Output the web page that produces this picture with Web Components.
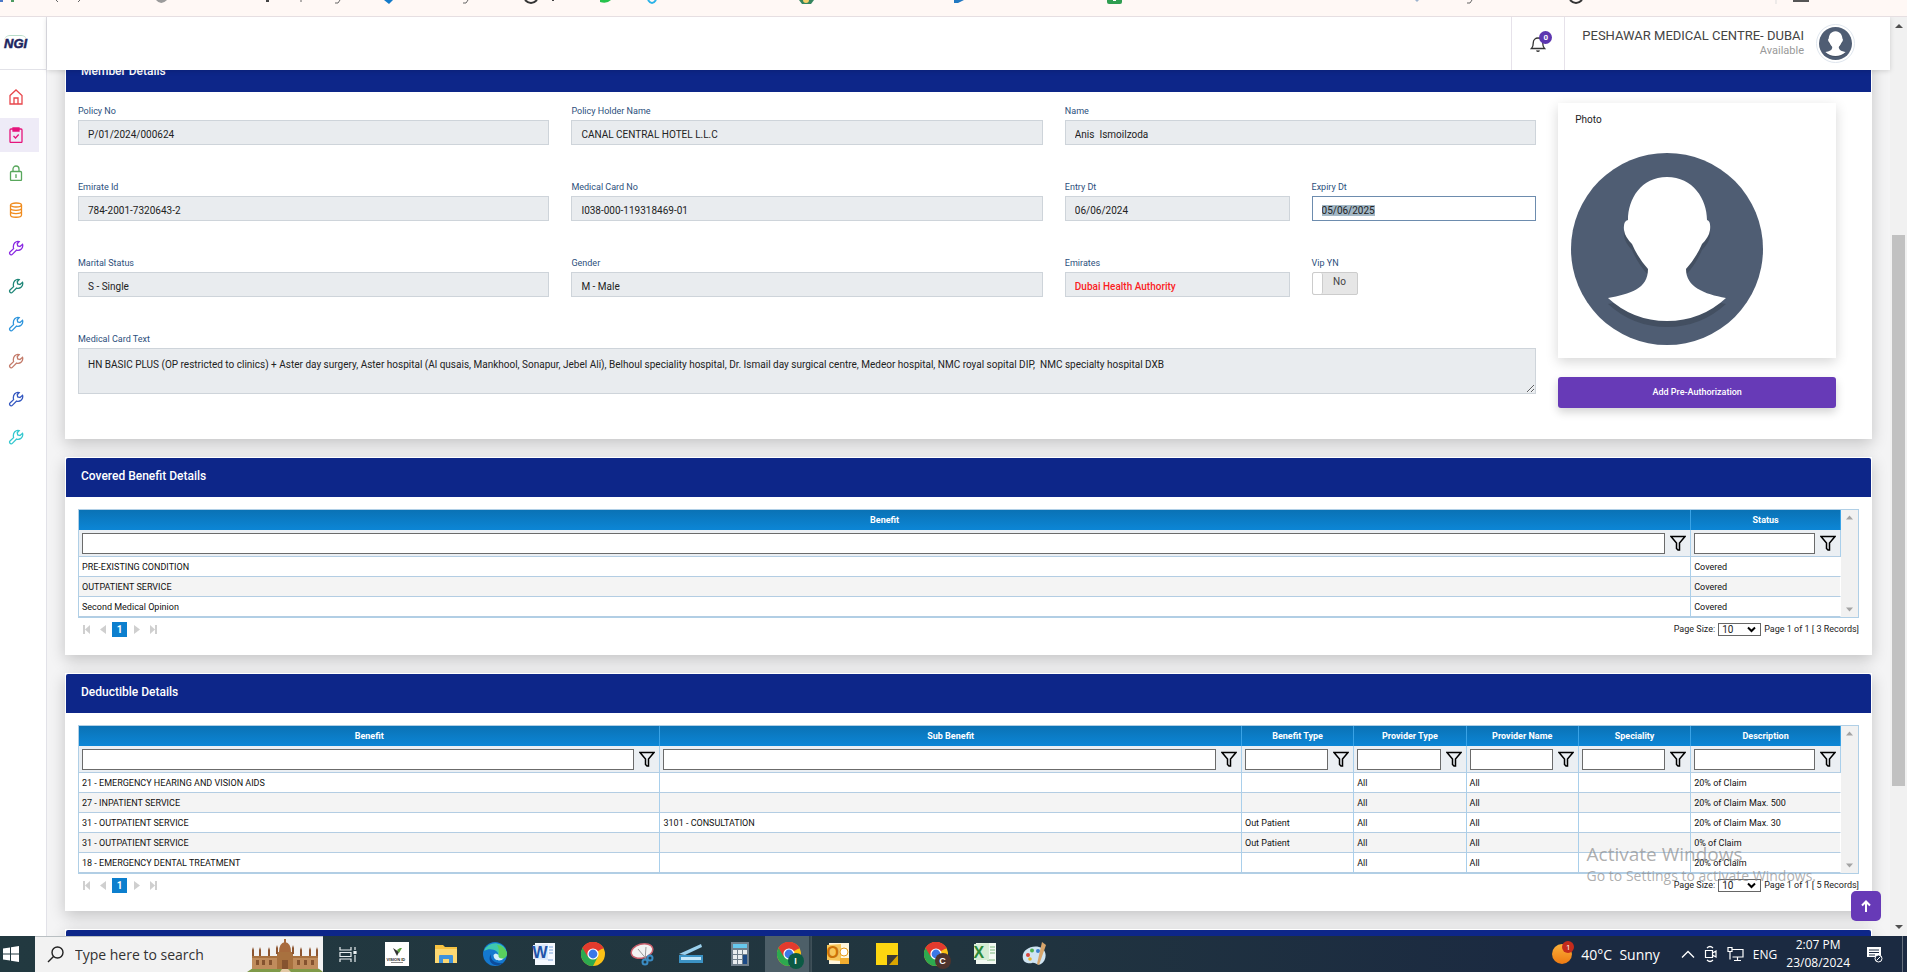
<!DOCTYPE html>
<html lang="en">
<head>
<meta charset="utf-8">
<title>Member Details</title>
<style>
  html, body { height: 100%; }
  body {
    margin: 0;
    overflow: hidden;
    font-family: Roboto, "Liberation Sans", sans-serif;
    font-size: 10px;
    color: #222;
  }
  claims-desktop { height: 100%; }
</style>
</head>
<body>
<claims-desktop></claims-desktop>

<script>
const make = (html) => {
  const t = document.createElement('template');
  t.innerHTML = html;
  return t;
};

class BaseElement extends HTMLElement {
  constructor() {
    super();
    this.attachShadow({ mode: 'open' });
    this.shadowRoot.appendChild(this.constructor.template.content.cloneNode(true));
  }
  $(sel) { return this.shadowRoot.querySelector(sel); }
}

// ---------- user silhouette ----------
class UserAvatar extends BaseElement {
  static template = make(`
    <style>
      :host { display: block; }
      svg { display: block; width: 100%; height: 100%; }
    </style>
    <svg viewBox="0 0 192 192" role="img" aria-label="User photo">
      <defs><path id="bust" d="M96 24 C70 24 57 46 57 67 Q52 68 53 77 Q54 84 61 91 Q67 105 77 116 C77 136 59 141 37 145 Q62 168 96 168 Q130 168 155 145 C133 141 115 134 115 116 Q125 105 131 91 Q138 84 139 77 Q140 68 136 67 C136 46 122 24 96 24Z"/></defs>
      <circle cx="96" cy="96" r="96" fill="#4f5d73"/>
      <use href="#bust" y="6" fill="#434f61"/>
      <use href="#bust" fill="#fff"/>
    </svg>`);
}
customElements.define('user-avatar', UserAvatar);

// ---------- strip of the browser's bookmark bar ----------
class BookmarkStrip extends BaseElement {
  static template = make(`
    <style>
      :host { display: block; flex: none; height: 16px; background: #fff8f5; border-bottom: 1px solid #e6dfe2; overflow: hidden; }
      svg { display: block; }
    </style>
    <svg width="1907" height="8" viewBox="0 0 1907 8" aria-hidden="true">
      <g fill="none" stroke="#666" stroke-width="1">
        <path d="M56 0l2 2M80 0l-2 2M301 0v2M340 0l-2 3h-3M468 0l-2 3h-3M1472 0l-2 3h-3"/>
      </g>
      <path d="M0 0h3v2H0z" fill="#4a78c8"/><path d="M11 0h3v2h-3z" fill="#4b9b62"/>
      <path d="M156 0q5 6 11 0z" fill="#9b9b9b"/>
      <path d="M266 0h3v2h-3zM552 0h2v1h-2z" fill="#444"/>
      <path d="M384 0h9l-4 4z" fill="#137ac9"/>
      <path d="M525 0q6 6 12 0M1570 0q6 6 12 0" fill="none" stroke="#333" stroke-width="2"/>
      <path d="M600 0h11q-4 4-11 2z" fill="#27c24c"/>
      <path d="M648 0q4 6 8 0" fill="none" stroke="#2bb3e8" stroke-width="2"/>
      <path d="M799 0h15l-3 4h-9z" fill="#35855f"/><circle cx="806" cy="0" r="3" fill="#f3d06b"/>
      <path d="M954 0h10l-6 3h-4z" fill="#2279c2"/>
      <path d="M1107 0h15v2q0 2-2 2h-11q-2 0-2-2z" fill="#2f9e51"/><path d="M1113 0h3v1h-3z" fill="#fff"/>
      <path d="M1415 0h4l-2 2z" fill="#9db3cf"/>
      <path d="M1776 0v4" stroke="#ddd"/>
      <path d="M1794 0v1h14v-1" fill="none" stroke="#555" stroke-width="2"/>
    </svg>`);
}
customElements.define('bookmark-strip', BookmarkStrip);

// ---------- left icon menu ----------
const wrench = '<path d="M2 14.2c-.7-.7-.6-1.6 0-2.2l3.6-3.4C5 6 5.5 4 6.8 2.7 8 1.500 9.600 1 11.200 1.500L9.200 3.700l.5 2.300 2.300.6 2.500-2.300c.6 1.900 0 3.500-1.200 4.700-1.300 1.200-3 1.600-4.700 1.100l-4.300 4.300c-.7.7-1.600.5-2.300-.2z"/>';
const menuIcons = [
  ['Home', '#e8474c', '<path d="M2 6.500L8 1l6 5.500V15H2zM6 15V9h4v6"/>'],
  ['Authorizations', '#e5157c', '<rect x="2" y="2" width="12" height="13.500" rx="1"/><path d="M5 1h6v3H5z" fill="currentColor"/><path d="M5.500 9l2 2 3.200-3.500"/>', true],
  ['Security', '#58a75c', '<rect x="2.500" y="6.500" width="11" height="9" rx="1"/><path d="M5 6.500V4a3 3 0 0 1 6 0v2.500M8 9.500v3.500M7.300 10h1.400"/>'],
  ['Data', '#f08c1e', '<ellipse cx="8" cy="3" rx="5.500" ry="2"/><path d="M2.500 3v10c0 3 11 3 11 0V3M2.500 6.300c0 2.700 11 2.700 11 0M2.500 9.600c0 2.700 11 2.700 11 0"/>'],
  ['Setup', '#8a2be2', wrench], ['Tools', '#1f8678', wrench], ['Reports', '#2f95dc', wrench],
  ['Claims', '#c47c6b', wrench], ['Masters', '#3558c0', wrench], ['Utilities', '#35c8cf', wrench]
];
class SideMenu extends BaseElement {
  static template = make(`
    <style>
      :host { display: block; flex: none; width: 46px; background: #fff; border-right: 1px solid #e2e2e8; }
      .logo { height: 52px; display: flex; align-items: center; padding-left: 4px; border-bottom: 1px solid #e2e2e8;
        font: italic bold 13px/16px "Liberation Sans", sans-serif; color: #1d2560; -webkit-text-stroke: 0.5px #1d2560; }
      .logo span { border-top: 1px solid #b8dcc9; border-radius: 6px; }
      nav { display: grid; align-content: space-between; height: 374px; padding-top: 10px; }
      a { display: flex; align-items: center; width: 23px; height: 34px; padding-left: 8px; padding-right: 8px; }
      a.on { background: #eeebf7; }
      svg { width: 16px; height: 16px; fill: none; stroke: currentColor; stroke-width: 1.3; }
    </style>
    <div class="logo"><span>NGI</span></div>
    <nav></nav>`);
  connectedCallback() {
    this.$('nav').innerHTML = menuIcons.map(([name, color, path, on]) =>
      `<a href="#" aria-label="${name}" class="${on ? 'on' : ''}" style="color:${color}"><svg viewBox="0 0 16 16">${path}</svg></a>`).join('');
  }
}
customElements.define('side-menu', SideMenu);

// ---------- top bar ----------
class TopBar extends BaseElement {
  static template = make(`
    <style>
      :host { display: flex; flex: none; justify-content: flex-end; height: 53px; background: #fff; position: relative; z-index: 2;
        box-shadow: 0 1px 5px rgba(0,0,0,.15); }
      .bell { position: relative; width: 54px; border: solid #e6e2ea; border-width: 0 1px; background: none; padding: 0; }
      .bell svg { display: block; margin: 0 auto 0 18px; }
      .badge { position: absolute; left: 27px; top: 14px; width: 13px; height: 13px; border-radius: 50%; background: #5d36b0;
        color: #fff; font: bold 8px/13px Roboto, sans-serif; text-align: center; }
      .user { display: flex; align-items: center; padding: 0 35px 0 17px; gap: 12px; }
      .who { text-align: right; color: #444; font-size: 13px; line-height: 16px; padding-bottom: 2px; }
      .who small { display: block; font-size: 11px; line-height: 14px; color: #999; }
      user-avatar { width: 33px; height: 33px; padding: 2px; border: 1px solid #dfe6ee; border-radius: 50%; }
    </style>
    <button class="bell" aria-label="Notifications">
      <svg width="16" height="18" viewBox="0 0 16 18" fill="none" stroke="#333" stroke-width="1.300"><path d="M1.500 13.500C3 12 3.300 10 3.300 7.500c0-6 9.400-6 9.400 0 0 2.500.3 4.500 1.800 6z"/><path d="M6.500 15.500q1.500 1.500 3 0"/></svg>
      <span class="badge">0</span>
    </button>
    <div class="user">
      <div class="who">PESHAWAR MEDICAL CENTRE- DUBAI<small>Available</small></div>
      <user-avatar></user-avatar>
    </div>`);
}
customElements.define('top-bar', TopBar);

// ---------- card with a blue title bar ----------
class PanelCard extends BaseElement {
  static template = make(`
    <style>
      :host { display: block; background: #fff; padding: 1px 1px 0; margin-bottom: 18px; box-shadow: 0 5px 15px rgba(0,0,0,.2); }
      h2 { margin: 0; height: 39px; padding: 0 15px; background: #0d2689; border-radius: 2px 2px 0 0; color: #fff;
        font-weight: 500; font-size: 12px; line-height: 37px; }
      .body { padding: 12px; }
      :host([form]) .body { padding: 11px 35px 31px 12px; }
      :host([grid]) .body { padding: 12px 12px 10px; }
    </style>
    <h2></h2>
    <div class="body"><slot></slot></div>`);
  connectedCallback() { this.$('h2').textContent = this.getAttribute('heading'); }
}
customElements.define('panel-card', PanelCard);

// ---------- labelled field ----------
class FormField extends BaseElement {
  static template = make(`
    <style>
      :host { display: block; min-width: 0; }
      label { display: block; height: 17px; line-height: 17px; font-size: 9px; color: #2c4f7c; }
      input, textarea { display: block; box-sizing: border-box; width: 100%; height: 25px; margin: 0; padding: 3px 9px 0;
        border: 1px solid #ced4da; border-radius: 0; background: #e9ecef; color: #222; font: inherit; outline: none; }
      textarea { height: 46px; padding: 9px 9px 0; line-height: 14px; overflow: hidden; }
      :host([alert]) input { color: #fb1d24; font-weight: 500; }
      :host([active]) input { background: #fff; border-color: #6d8cae; }
      ::selection { background: #a3b8c6; color: #222; }
    </style>
    <label for="f"></label>`);
  connectedCallback() {
    this.$('label').textContent = this.getAttribute('label');
    const box = document.createElement(this.hasAttribute('multiline') ? 'textarea' : 'input');
    box.id = 'f';
    box.value = this.getAttribute('value');
    box.readOnly = true;
    this.shadowRoot.appendChild(box);
    if (this.hasAttribute('active')) {
      box.readOnly = false;
      box.focus();
      box.select();
    }
  }
}
customElements.define('form-field', FormField);

class YesNoSwitch extends BaseElement {
  static template = make(`
    <style>
      :host { display: block; }
      label { display: block; height: 17px; line-height: 17px; font-size: 9px; color: #2c4f7c; }
      .switch { display: flex; box-sizing: border-box; width: 46px; height: 23px; border: 1px solid #ccc; border-radius: 2px; background: #e6e6e6; }
      input { appearance: none; flex: none; width: 10px; margin: 0; background: #fff; border-right: 1px solid #ccc; border-radius: 2px; }
      span { flex: 1; text-align: center; line-height: 18px; color: #444; }
    </style>
    <label for="s">Vip YN</label>
    <div class="switch"><input type="checkbox" id="s"><span>No</span></div>`);
}
customElements.define('yes-no-switch', YesNoSwitch);

// ---------- member form ----------
class MemberForm extends BaseElement {
  static template = make(`
    <style>
      :host { display: grid; grid-template-columns: 21fr 4fr; gap: 22px; }
      .fields { display: grid; grid-template-columns: repeat(3, 1fr); gap: 34px 22px; align-content: start; }
      .pair { display: grid; grid-template-columns: 1fr 1fr; gap: 22px; }
      .wide { grid-column: 1 / -1; }
      .photo { height: 230px; padding: 12px 13px 13px; box-shadow: 0 4px 12px rgba(0,0,0,.16); background: #fff; }
      .photo p { margin: 0; height: 38px; padding-left: 4px; line-height: 10px; }
      .photo user-avatar { width: 192px; height: 192px; }
      button { display: block; width: 100%; height: 31px; margin-top: 19px; border: 0; border-radius: 3px; background: #673ab7; color: #fff;
        font: 500 9px/31px Roboto, sans-serif; box-shadow: 0 4px 10px rgba(0,0,0,.18); padding: 0; }
    </style>
    <div class="fields">
      <form-field label="Policy No" value="P/01/2024/000624"></form-field>
      <form-field label="Policy Holder Name" value="CANAL CENTRAL HOTEL L.L.C"></form-field>
      <form-field label="Name" value="Anis  Ismoilzoda"></form-field>
      <form-field label="Emirate Id" value="784-2001-7320643-2"></form-field>
      <form-field label="Medical Card No" value="I038-000-119318469-01"></form-field>
      <div class="pair">
        <form-field label="Entry Dt" value="06/06/2024"></form-field>
        <form-field label="Expiry Dt" value="05/06/2025" active></form-field>
      </div>
      <form-field label="Marital Status" value="S - Single"></form-field>
      <form-field label="Gender" value="M - Male"></form-field>
      <div class="pair">
        <form-field label="Emirates" value="Dubai Health Authority" alert></form-field>
        <yes-no-switch></yes-no-switch>
      </div>
      <form-field class="wide" multiline label="Medical Card Text" value="HN BASIC PLUS (OP restricted to clinics) + Aster day surgery, Aster hospital (Al qusais, Mankhool, Sonapur, Jebel Ali), Belhoul speciality hospital, Dr. Ismail day surgical centre, Medeor hospital, NMC royal sopital DIP,  NMC specialty hospital DXB"></form-field>
    </div>
    <div>
      <div class="photo"><p>Photo</p><user-avatar></user-avatar></div>
      <button>Add Pre-Authorization</button>
    </div>`);
}
customElements.define('member-form', MemberForm);

// ---------- filterable grid ----------
const grids = {
  covered: {
    cols: [['Benefit', 91.5], ['Status', 8.5]],
    rows: [['PRE-EXISTING CONDITION', 'Covered'], ['OUTPATIENT SERVICE', 'Covered'], ['Second Medical Opinion', 'Covered']]
  },
  deductible: {
    cols: [['Benefit', 33], ['Sub Benefit', 33], ['Benefit Type', 6.375], ['Provider Type', 6.375], ['Provider Name', 6.375], ['Speciality', 6.375], ['Description', 8.5]],
    rows: [
      ['21 - EMERGENCY HEARING AND VISION AIDS', '', '', 'All', 'All', '', '20% of Claim'],
      ['27 - INPATIENT SERVICE', '', '', 'All', 'All', '', '20% of Claim Max. 500'],
      ['31 - OUTPATIENT SERVICE', '3101 - CONSULTATION', 'Out Patient', 'All', 'All', '', '20% of Claim Max. 30'],
      ['31 - OUTPATIENT SERVICE', '', 'Out Patient', 'All', 'All', '', '0% of Claim'],
      ['18 - EMERGENCY DENTAL TREATMENT', '', '', 'All', 'All', '', '20% of Claim']
    ]
  }
};
class DataGrid extends BaseElement {
  static template = make(`
    <style>
      :host { display: block; }
      .frame { display: flex; border: 1px solid #b0cfe6; }
      table { flex: 1; width: 0; table-layout: fixed; border-collapse: separate; border-spacing: 0; }
      th, td { padding: 0; box-sizing: border-box; border-right: 1px solid #a9cfeb; overflow: hidden; white-space: nowrap; }
      th { height: 20px; background: linear-gradient(#0a72b5, #0c86d6); border-right-color: #3aa3e6; color: #fff;
        font-weight: bold; font-size: 9px; }
      .filter td { height: 27px; background: #ebeff3; border-bottom: 1px solid #b3cde3; }
      .filter div { display: flex; align-items: center; gap: 5px; padding: 0 4px 0 3px; }
      .filter input { flex: 1; min-width: 0; box-sizing: border-box; height: 21px; border: 1px solid #6b6b6b; padding: 0 2px; background: #fff; }
      .filter button { flex: none; width: 16px; height: 16px; padding: 0; border: 0; background: none; }
      svg { display: block; }
      .row td { height: 20px; padding-left: 3px; border-bottom: 1px solid #b3cde3; font-size: 9px; line-height: 16px; color: #111; }
      .row:nth-child(odd) td { background: #f4f4f4; }
      .row td:last-child { border-right-color: #fff; }
      .bar { flex: none; width: 17px; display: flex; flex-direction: column; justify-content: space-between; align-items: center;
        background: #f1f1f1; padding: 5px 0; box-sizing: border-box; }
      .pager { display: flex; align-items: center; justify-content: space-between; height: 16px; padding: 3px 0 8px; font-size: 9px; color: #222; }
      .pages { display: flex; align-items: center; gap: 2px; }
      .pages button { display: grid; place-items: center; width: 15px; height: 15px; padding: 0; border: 0; background: none; }
      .pages .on { background: #0c7fce; color: #fff; font: bold 10px/15px Roboto, sans-serif; }
      .size { display: flex; align-items: center; gap: 3px; }
      select { appearance: none; box-sizing: border-box; width: 43px; height: 13px; padding: 0 0 0 3px; border: 1px solid #666; border-radius: 0;
        color: #222; font: 10px/11px Roboto, sans-serif; background: #fff; }
      .pick { display: grid; align-items: center; }
      .pick > * { grid-area: 1 / 1; }
      .pick svg { justify-self: end; margin-right: 5px; pointer-events: none; }
    </style>
    <div class="frame">
      <table><thead></thead><tbody></tbody></table>
      <div class="bar">
        <svg width="7" height="5" fill="#a3a3a3"><path d="M0 4.500L3.500.5 7 4.500z"/></svg>
        <svg width="7" height="5" fill="#a3a3a3"><path d="M0 .5h7L3.500 4.500z"/></svg>
      </div>
    </div>
    <div class="pager">
      <div class="pages">
        <button aria-label="First page"><svg width="8" height="9" fill="#cfcfcf"><path d="M1 0h2v9H1zM8 0v9L3 4.500z"/></svg></button>
        <button aria-label="Previous page"><svg width="6" height="9" fill="#cfcfcf"><path d="M6 0v9L0 4.500z"/></svg></button>
        <button class="on">1</button>
        <button aria-label="Next page"><svg width="6" height="9" fill="#cfcfcf"><path d="M0 0v9l6-4.500z"/></svg></button>
        <button aria-label="Last page"><svg width="8" height="9" fill="#cfcfcf"><path d="M0 0v9l5-4.500zM5 0h2v9H5z"/></svg></button>
      </div>
      <div class="size">
        <label for="ps">Page Size:</label>
        <div class="pick">
          <select id="ps"><option>10</option></select>
          <svg width="9" height="7" fill="none" stroke="#000" stroke-width="2"><path d="M1 1.500l3.500 3.500L8 1.500"/></svg>
        </div>
        <span class="total"></span>
      </div>
    </div>`);
  connectedCallback() {
    const { cols, rows } = grids[this.getAttribute('source')];
    const funnel = '<svg width="16" height="16" viewBox="0 0 16 16" fill="none" stroke="#000" stroke-width="1.500"><path d="M1 1.500h14L9.500 8v7H8L6.500 13.500V8z"/></svg>';
    this.$('thead').innerHTML =
      '<tr>' + cols.map(([name, w]) => `<th style="width:${w}%">${name}</th>`).join('') + '</tr>';
    this.$('tbody').innerHTML =
      '<tr class="filter">' + cols.map(([name]) =>
        `<td><div><input aria-label="Filter ${name}"><button aria-label="Filter ${name}">${funnel}</button></div></td>`).join('') + '</tr>' +
      rows.map(r => '<tr class="row">' + r.map(c => `<td>${c}</td>`).join('') + '</tr>').join('');
    this.$('.total').textContent = `Page 1 of 1 [ ${rows.length} Records]`;
  }
}
customElements.define('data-grid', DataGrid);

// ---------- window scrollbar ----------
class ScrollTrack extends BaseElement {
  static template = make(`
    <style>
      :host { display: grid; grid-template-rows: 17px 201fr 551fr 133fr 17px; justify-items: center; align-items: center;
        flex: none; width: 17px; background: #f1f1f1; }
      i { grid-row: 3; width: 13px; height: 100%; background: #c1c1c1; }
      svg:last-child { grid-row: 5; }
    </style>
    <svg width="8" height="5" fill="#505050"><path d="M0 5l4-4 4 4z"/></svg>
    <i></i>
    <svg width="8" height="5" fill="#505050"><path d="M0 0h8L4 4z"/></svg>`);
}
customElements.define('scroll-track', ScrollTrack);

// ---------- taskbar ----------
const chrome = (extra = '') => `<svg viewBox="0 0 24 24"><circle cx="12" cy="12" r="12" fill="#fbc116"/>
  <path d="M12 12L1.600 6A12 12 0 0 1 22.400 6z" fill="#e33b2e"/><path d="M1.600 6A12 12 0 0 0 12 24l5-9.500-5-2.500z" fill="#2da94f"/>
  <path d="M12 6.500h10.600A12 12 0 0 0 1.600 6l5 8.500z" fill="#e33b2e"/><circle cx="12" cy="12" r="5.600" fill="#fff"/><circle cx="12" cy="12" r="4.400" fill="#3b78e7"/></svg>${extra}`;
const apps = [
  ['Task View', '<svg viewBox="0 0 24 24" fill="none" stroke="#e8eef0" stroke-width="1.200"><path d="M4 5v3h11V5M4 20v-3h11v3M4 10.500h11v4H4zM19 5v3M19 13v7"/><path d="M18 9.500h2v2h-2z" fill="#fff"/></svg>'],
  ['Vision', '<svg viewBox="0 0 24 24"><path fill="#fff" d="M0 0h24v24H0z"/><path d="M8 6l4 8 2-4z" fill="#333"/><path d="M12 8l2 3 3-5h-2z" fill="#5b9e3c"/><path d="M6 20.500h12" stroke="#888"/></svg><b class="vis">VISION ID</b>'],
  ['File Explorer', '<svg viewBox="0 0 24 24"><path d="M1 3h8l2 2h12v16H1z" fill="#f7c342"/><path d="M1 7h22v14H1z" fill="#fdd872"/><path d="M5 21v-7q0-1 1-1h12q1 0 1 1v7h-4v-4H9v4z" fill="#3f92dc"/></svg>'],
  ['Edge', '<svg viewBox="0 0 24 24"><circle cx="12" cy="12" r="12" fill="#1478cf"/><path d="M1 9A12 12 0 0 1 24 11c0 4-3 6-6 6-3.500 0-3.500-2-2.700-3.500C16 9 8 5 1 9z" fill="#3fc8b0"/><path d="M14 3a12 12 0 0 1 10 8c0 4-3 6-6 6-3.500 0-3.500-2-2.700-3.500C16.500 10 16 6 14 3z" fill="#5ad05d"/><path d="M8 12c-1 6 4 10 12 9-8 6-17-1-12-9z" fill="#0c4c9c"/><path d="M15.500 13c-.5 2 1 4 5 3.500-2 3-10 3-10-3.500q2-3 5 0z" fill="#d5eefa"/></svg>'],
  ['Word', '<svg viewBox="0 0 24 24"><path fill="#f5f9ff" d="M3 1h20v22H3z"/><path d="M17 5h4M17 8h4M17 11h4M16 18h5" stroke="#7ba4dc"/><path d="M1 3l15-1v16L1 17z" fill="#dbe8fa"/></svg><b class="let" style="color:#2152a8">W</b>'],
  ['Chrome', chrome()],
  ['Snipping Tool', '<svg viewBox="0 0 24 24"><ellipse cx="12" cy="9" rx="11" ry="7" fill="#f3f3f3" stroke="#c9606d" stroke-width="1.500" transform="rotate(-15 12 9)"/><path d="M8 7l10 12M16 5l-1 13" stroke="#999"/><g fill="none" stroke="#3a8cc4" stroke-width="2"><circle cx="15" cy="20" r="2.500"/><circle cx="20" cy="16" r="2.500"/></g></svg>'],
  ['Scanner', '<svg viewBox="0 0 24 24"><path d="M0 12L22 2l1 3L6 13z" fill="#9bd1ee"/><path d="M0 13h24v8H0z" fill="#3b92c4"/><path d="M2 15h20v3H2z" fill="#c5e8fa"/></svg>'],
  ['Calculator', '<svg viewBox="0 0 24 24"><path fill="#6f7f8c" d="M3 0h18v24H3z"/><path fill="#66c8ee" d="M5 2h14v4H5z"/><path fill="#e8edf0" d="M5 8h4v4H5zM10 8h4v4h-4zM15 8h4v4h-4zM5 13h4v4H5zM10 13h4v4h-4zM5 18h4v4H5zM10 18h4v4h-4z"/><path fill="#1b4a86" d="M15 13h4v9h-4z"/></svg>'],
  ['Chrome I', chrome('<b class="tag" style="background:#0b5a44">I</b>'), true],
  ['Outlook', '<svg viewBox="0 0 24 24"><path fill="#fff6dc" d="M3 1h20v21H3z"/><path d="M1 3l14-1v17L1 18z" fill="#f7c65a"/><circle cx="18" cy="10" r="4" fill="#fff" stroke="#e59b1b"/><path d="M14 16h9v6h-9z" fill="#f2ae30"/></svg><b class="let" style="color:#cb7208">O</b>'],
  ['Sticky Notes', '<svg viewBox="0 0 24 24"><path fill="#fdd610" d="M1 1h22v22H1z"/><path d="M12 23V13h11v3l-6 7z" fill="#3c3a35"/><path d="M14 23l9-10v10z" fill="#dba600"/></svg>'],
  ['Chrome C', chrome('<b class="tag" style="background:#4e342e">C</b>')],
  ['Excel', '<svg viewBox="0 0 24 24"><path fill="#f3faf3" d="M3 1h20v21H3z"/><path d="M17 5h5M17 8h5M17 11h5M14 18h8" stroke="#7cb87f"/><path d="M1 2l15-1v17L1 18z" fill="#d5ecd4"/></svg><b class="let" style="color:#2b8a38">X</b>'],
  ['Paint', '<svg viewBox="0 0 24 24"><path d="M1 17C-1 9 8 3 17 5s8 14 2 17c-4 2-6-2-9-1s-8 0-9-4z" fill="#cfe4f2"/><circle cx="6" cy="13" r="2" fill="#d8433c"/><circle cx="10" cy="8.500" r="2" fill="#4caf50"/><circle cx="16" cy="9" r="2" fill="#3a7fd0"/><circle cx="8" cy="17" r="1.800" fill="#e5b52e"/><path d="M20 0l4 3-7 20-2-1z" fill="#d7a56b"/></svg>']
];
class TaskBar extends BaseElement {
  static template = make(`
    <style>
      :host { display: flex; flex: none; height: 36px; background: linear-gradient(90deg, #223940, #21353f 50%, #1b2a41 80%);
        color: #fff; font-family: "Open Sans", "Noto Sans", sans-serif; }
      button { border: 0; padding: 0; background: none; color: inherit; font: inherit; }
      .start { width: 35px; padding-left: 3px; text-align: left; }
      .search { display: flex; align-items: center; box-sizing: border-box; width: 288px; padding-left: 12px; gap: 11px; background: #f2f2f2; border-top: 1px solid #b9bfc2; overflow: hidden; }
      .search input { flex: 1; min-width: 0; border: 0; padding: 0; background: none; font: 14px/20px "Open Sans", sans-serif; outline: none; }
      .search input::placeholder { color: #333; opacity: 1; }
      .search svg { flex: none; }
      .apps { display: flex; flex: 1; }
      .app { display: grid; place-items: center; width: 49px; }
      .app.on { background: linear-gradient(90deg, transparent 1px, #4d5f68 1px, #4d5f68 45px, #2a3c45 45px, #43545c 48px, transparent 48px); }
      .app span { position: relative; width: 24px; height: 24px; }
      .app svg { display: block; width: 24px; height: 24px; }
      .app b { position: absolute; font-family: "Liberation Sans", sans-serif; }
      .app .vis { left: 2px; bottom: 4px; font-size: 4px; line-height: 4px; color: #222; white-space: nowrap; }
      .app .let { left: 1px; top: 2px; font-size: 16px; line-height: 17px; }
      .app .tag { right: -3px; bottom: -3px; width: 16px; height: 16px; border-radius: 50%; font-size: 9px; line-height: 16px; text-align: center; }
      .tray { display: flex; align-items: center; gap: 9px; padding-right: 4px; font-size: 14px; }
      .sun { position: relative; width: 20px; height: 20px; border-radius: 50%; background: linear-gradient(#fbb03a, #ee7a12); }
      .sun b { position: absolute; right: -2px; top: -3px; width: 12px; height: 12px; border-radius: 50%; background: #c42b1c; font-size: 8px; line-height: 12px; text-align: center; font-weight: normal; }
      .weather { margin-right: 12px; white-space: pre; }
      .clock { margin-right: 7px; font-size: 12px; line-height: 18px; text-align: center; }
      .end { align-self: stretch; width: 1px; margin-left: 10px; background: #65707c; }
      .lang { font-size: 12px; }
      svg { display: block; }
    </style>
    <button class="start" aria-label="Start"><svg width="16" height="16" fill="#fff"><path d="M0 2.500L7 1.500V7.500H0zM8 1.300L16 0v7.500H8zM0 8.500h7v6L0 13.500zM8 8.500h8V16L8 14.700z"/></svg></button>
    <div class="search">
      <svg width="17" height="17" fill="none" stroke="#222" stroke-width="1.400"><circle cx="10.500" cy="6.500" r="5.500"/><path d="M6.500 10.500L1 16"/></svg>
      <input aria-label="Search" placeholder="Type here to search">
      <svg width="76" height="34" viewBox="0 0 76 34">
        <path d="M0 34q10-8 20-4l36-1q12-3 20 5z" fill="#7f9a48"/>
        <path d="M5 18h66v13H5z" fill="#c08c5c"/><path d="M5 18h66v2H5zM30 14h16v17H30z" fill="#a8713f"/>
        <path d="M32 14q0-9 6-10 6 1 6 10zM37 1h2v5h-2z" fill="#a86a3d"/>
        <path d="M5 18v-6l1-3 1 3v6zM12 18v-6l1-3 1 3v6zM21 18v-6l1-3 1 3v6zM53 18v-6l1-3 1 3v6zM62 18v-6l1-3 1 3v6zM69 18v-6l1-3 1 3v6zM29 16v-6l1-3 1 3v6zM45 16v-6l1-3 1 3v6z" fill="#8d5530"/>
        <path d="M9 22h3v5H9zM15 22h3v5h-3zM22 22h3v5h-3zM50 22h3v5h-3zM57 22h3v5h-3zM64 22h3v5h-3zM35 22h6v9h-6z" fill="#85532f"/>
        <path d="M33 34l2-3h6l3 3z" fill="#e3c9a5"/>
      </svg>
    </div>
    <div class="apps"></div>
    <div class="tray">
      <div class="sun"><b>1</b></div>
      <div class="weather">40°C  Sunny</div>
      <svg width="14" height="8" fill="none" stroke="#fff" stroke-width="1.300"><path d="M1 7.500l6-6 6 6"/></svg>
      <svg width="14" height="18" fill="none" stroke="#fff" stroke-width="1.200"><path d="M1.500 5.500h7v7h-7zM8.500 8l3.500-2v6l-3.500-2M3 3q3-3 6 0M3 15q3 3 6 0"/></svg>
      <svg width="17" height="16" fill="none" stroke="#fff" stroke-width="1.200"><path d="M5 3.500h11v7.500H5.500M1 1.500h4v4H1zM3 5.500v8M10.500 11v3M7 14.500h7"/></svg>
      <span class="lang">ENG</span>
      <div class="clock">2:07 PM<br>23/08/2024</div>
      <svg width="17" height="17"><path d="M1 1h14v10h-3l-3 3v-3H1z" fill="#fff"/><path d="M3 4h10M3 6.500h10M3 9h6" stroke="#1b2a41"/><circle cx="12.500" cy="12.500" r="3.500" fill="#1b2a41" stroke="#fff"/><path d="M10.500 14.500l4-4" stroke="#fff"/></svg>
      <div class="end"></div>
    </div>`);
  connectedCallback() {
    this.$('.apps').innerHTML = apps.map(([name, icon, on]) =>
      `<button class="app ${on ? 'on' : ''}" aria-label="${name}"><span>${icon}</span></button>`).join('');
  }
}
customElements.define('task-bar', TaskBar);

// ---------- whole screen ----------
class ClaimsDesktop extends BaseElement {
  static template = make(`
    <style>
      :host { display: flex; flex-direction: column; position: relative; }
      .window { display: flex; flex: 1; min-height: 0; overflow: hidden; }
      .page { display: flex; flex-direction: column; flex: 1; min-width: 0; }
      main { flex: 1; min-height: 0; overflow: hidden; background: #f4f4f5; padding: 0 18px; }
      .cards { margin-top: -18px; }
      .up { position: absolute; right: 26px; bottom: 51px; width: 30px; height: 30px; padding: 0; border: 0; border-radius: 5px; background: #673ab7; z-index: 3; }
      .up svg { display: block; margin: auto; }
      .mark { position: absolute; right: 91px; bottom: 86px; z-index: 2; color: rgba(140,140,140,.7); font: 14px/20px "Open Sans", "Noto Sans", sans-serif; pointer-events: none; }
      .mark b { display: block; font-weight: normal; font-size: 19px; line-height: 24px; }
    </style>
    <bookmark-strip></bookmark-strip>
    <div class="window">
      <side-menu></side-menu>
      <div class="page">
        <top-bar></top-bar>
        <main>
          <div class="cards">
            <panel-card heading="Member Details" form><member-form></member-form></panel-card>
            <panel-card heading="Covered Benefit Details" grid><data-grid source="covered"></data-grid></panel-card>
            <panel-card heading="Deductible Details" grid><data-grid source="deductible"></data-grid></panel-card>
            <panel-card heading=""></panel-card>
          </div>
        </main>
      </div>
      <scroll-track></scroll-track>
    </div>
    <task-bar></task-bar>
    <div class="mark"><b>Activate Windows</b>Go to Settings to activate Windows.</div>
    <button class="up" aria-label="Back to top"><svg width="10" height="12" fill="none" stroke="#fff" stroke-width="2"><path d="M5 12V2M1 5.500L5 1.500l4 4"/></svg></button>`);
}
customElements.define('claims-desktop', ClaimsDesktop);
</script>
</body>
</html>
